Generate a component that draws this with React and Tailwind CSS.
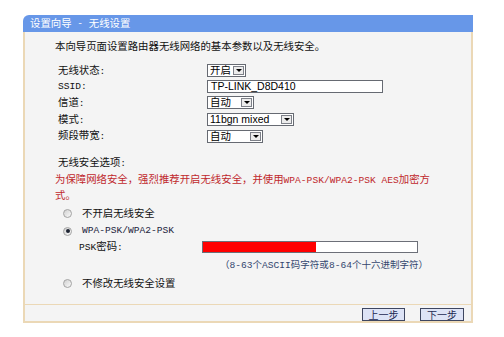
import React from "react";

const M = ({ children, className = "" }) => (
  <span className={`font-['Liberation_Mono',monospace] text-[9.6px] ${className}`}>{children}</span>
);

function Sel({ w, text, sans }) {
  return (
    <div className={`${w} h-[13px] border border-[#666a72] bg-white flex items-stretch`}>
      <div
        className={`flex-1 pl-[2px] flex items-center whitespace-nowrap ${
          sans ? "font-['Liberation_Sans',sans-serif] text-[10.5px]" : "text-[10.4px]"
        } text-black leading-none`}
      >
        {text}
      </div>
      <div className="w-[11px] my-[1px] mr-[1px] border border-[#7d8088] bg-[#ececec] flex items-center justify-center">
        <div className="w-0 h-0 border-x-[3px] border-x-transparent border-t-[3px] border-t-black" />
      </div>
    </div>
  );
}

function Radio({ checked }) {
  return (
    <div className="w-[9px] h-[9px] rounded-full border border-[#a3a3a3] bg-gradient-to-br from-[#d0d0d0] to-[#fafafa] flex items-center justify-center">
      {checked && <div className="w-[4px] h-[4px] rounded-full bg-[#1e2433]" />}
    </div>
  );
}

function Row({ h, label, children }) {
  return (
    <div className={`${h} flex items-center`}>
      <div className="w-[152px] pl-[3px] whitespace-nowrap">{label}</div>
      {children}
    </div>
  );
}

export default function App() {
  return (
    <div className="w-[504px] h-[337px] bg-white pt-[15px] pl-[23px] font-['Noto_Sans_CJK_SC',sans-serif] text-[10.4px] text-[#111]">
      <div className="w-[450px] h-[308px] flex flex-col">
        <div className="h-[17px] bg-[#6797e8] rounded-tl-[6px] text-white pl-[7px] flex items-center leading-none whitespace-nowrap">
          设置向导<M className="whitespace-pre"> - </M>无线设置
        </div>
        <div className="flex-1 bg-[#f4f4f4] border-x-2 border-b-2 border-[#ebd8b6] flex flex-col">
          <div className="flex-1 pl-[30px] flex flex-col">
            <div className="mt-[7px] h-[14px] leading-[14px] whitespace-nowrap">
              本向导页面设置路由器无线网络的基本参数以及无线安全。
            </div>
            <div className="mt-[10px] flex flex-col">
              <Row h="h-[15px]" label={<>无线状态<M>:</M></>}>
                <Sel w="w-[39px]" text="开启" />
              </Row>
              <Row h="h-[16px]" label={<M>SSID:</M>}>
                <div className="w-[176px] h-[13px] border border-[#666a72] bg-white pl-[3px] font-['Liberation_Sans',sans-serif] text-[10.5px] leading-[11px] text-black">
                  TP-LINK_D8D410
                </div>
              </Row>
              <Row h="h-[17px]" label={<>信道<M>:</M></>}>
                <Sel w="w-[47px]" text="自动" />
              </Row>
              <Row h="h-[17px]" label={<>模式<M>:</M></>}>
                <Sel w="w-[87px]" text="11bgn mixed" sans />
              </Row>
              <Row h="h-[16px]" label={<>频段带宽<M>:</M></>}>
                <Sel w="w-[56px]" text="自动" />
              </Row>
            </div>
            <div className="mt-[11px] h-[14px] leading-[14px] pl-[3px]">
              无线安全选项<M>:</M>
            </div>
            <div className="mt-[3px] leading-[14px] text-[#c0282c] whitespace-nowrap">
              为保障网络安全，强烈推荐开启无线安全，并使用<M>WPA-PSK/WPA2-PSK AES</M>加密方
              <br />
              式。
            </div>
            <div className="mt-[4px] h-[14px] flex items-center">
              <div className="w-[27px] pl-[8px]">
                <Radio />
              </div>
              <span>不开启无线安全</span>
            </div>
            <div className="mt-[4px] h-[14px] flex items-center">
              <div className="w-[27px] pl-[8px]">
                <Radio checked />
              </div>
              <M className="text-[#1c2440]">WPA-PSK/WPA2-PSK</M>
            </div>
            <div className="mt-[2px] h-[13px] flex items-center">
              <div className="w-[147px] pl-[24px] whitespace-nowrap">
                <M>PSK</M>密码<M>:</M>
              </div>
              <div className="w-[216px] h-[12px] border border-[#6c6f78] bg-white flex items-stretch">
                <div className="w-[113px] bg-[#ff0000]" />
              </div>
            </div>
            <div className="mt-[4px] h-[14px] leading-[14px] pl-[165px] text-[9.5px] text-[#33466e] whitespace-nowrap">
              （<M className="text-[9.5px]">8-63</M>个<M className="text-[9.5px]">ASCII</M>码字符或<M className="text-[9.5px]">8-64</M>个十六进制字符）
            </div>
            <div className="mt-[5px] h-[14px] flex items-center">
              <div className="w-[27px] pl-[8px]">
                <Radio />
              </div>
              <span>不修改无线安全设置</span>
            </div>
          </div>
          <div className="h-[17px] border-t border-[#ebd8b6] flex justify-end items-start pt-[3px] pr-[7px] gap-[15px]">
            <div className="w-[43px] h-[13px] border border-[#3e4660] bg-[#dde3f6] text-[#1c2852] text-[10px] leading-none flex items-center justify-center">
              上一步
            </div>
            <div className="w-[44px] h-[13px] border border-[#3e4660] bg-[#dde3f6] text-[#1c2852] text-[10px] leading-none flex items-center justify-center">
              下一步
            </div>
          </div>
        </div>
      </div>
    </div>
  );
}
